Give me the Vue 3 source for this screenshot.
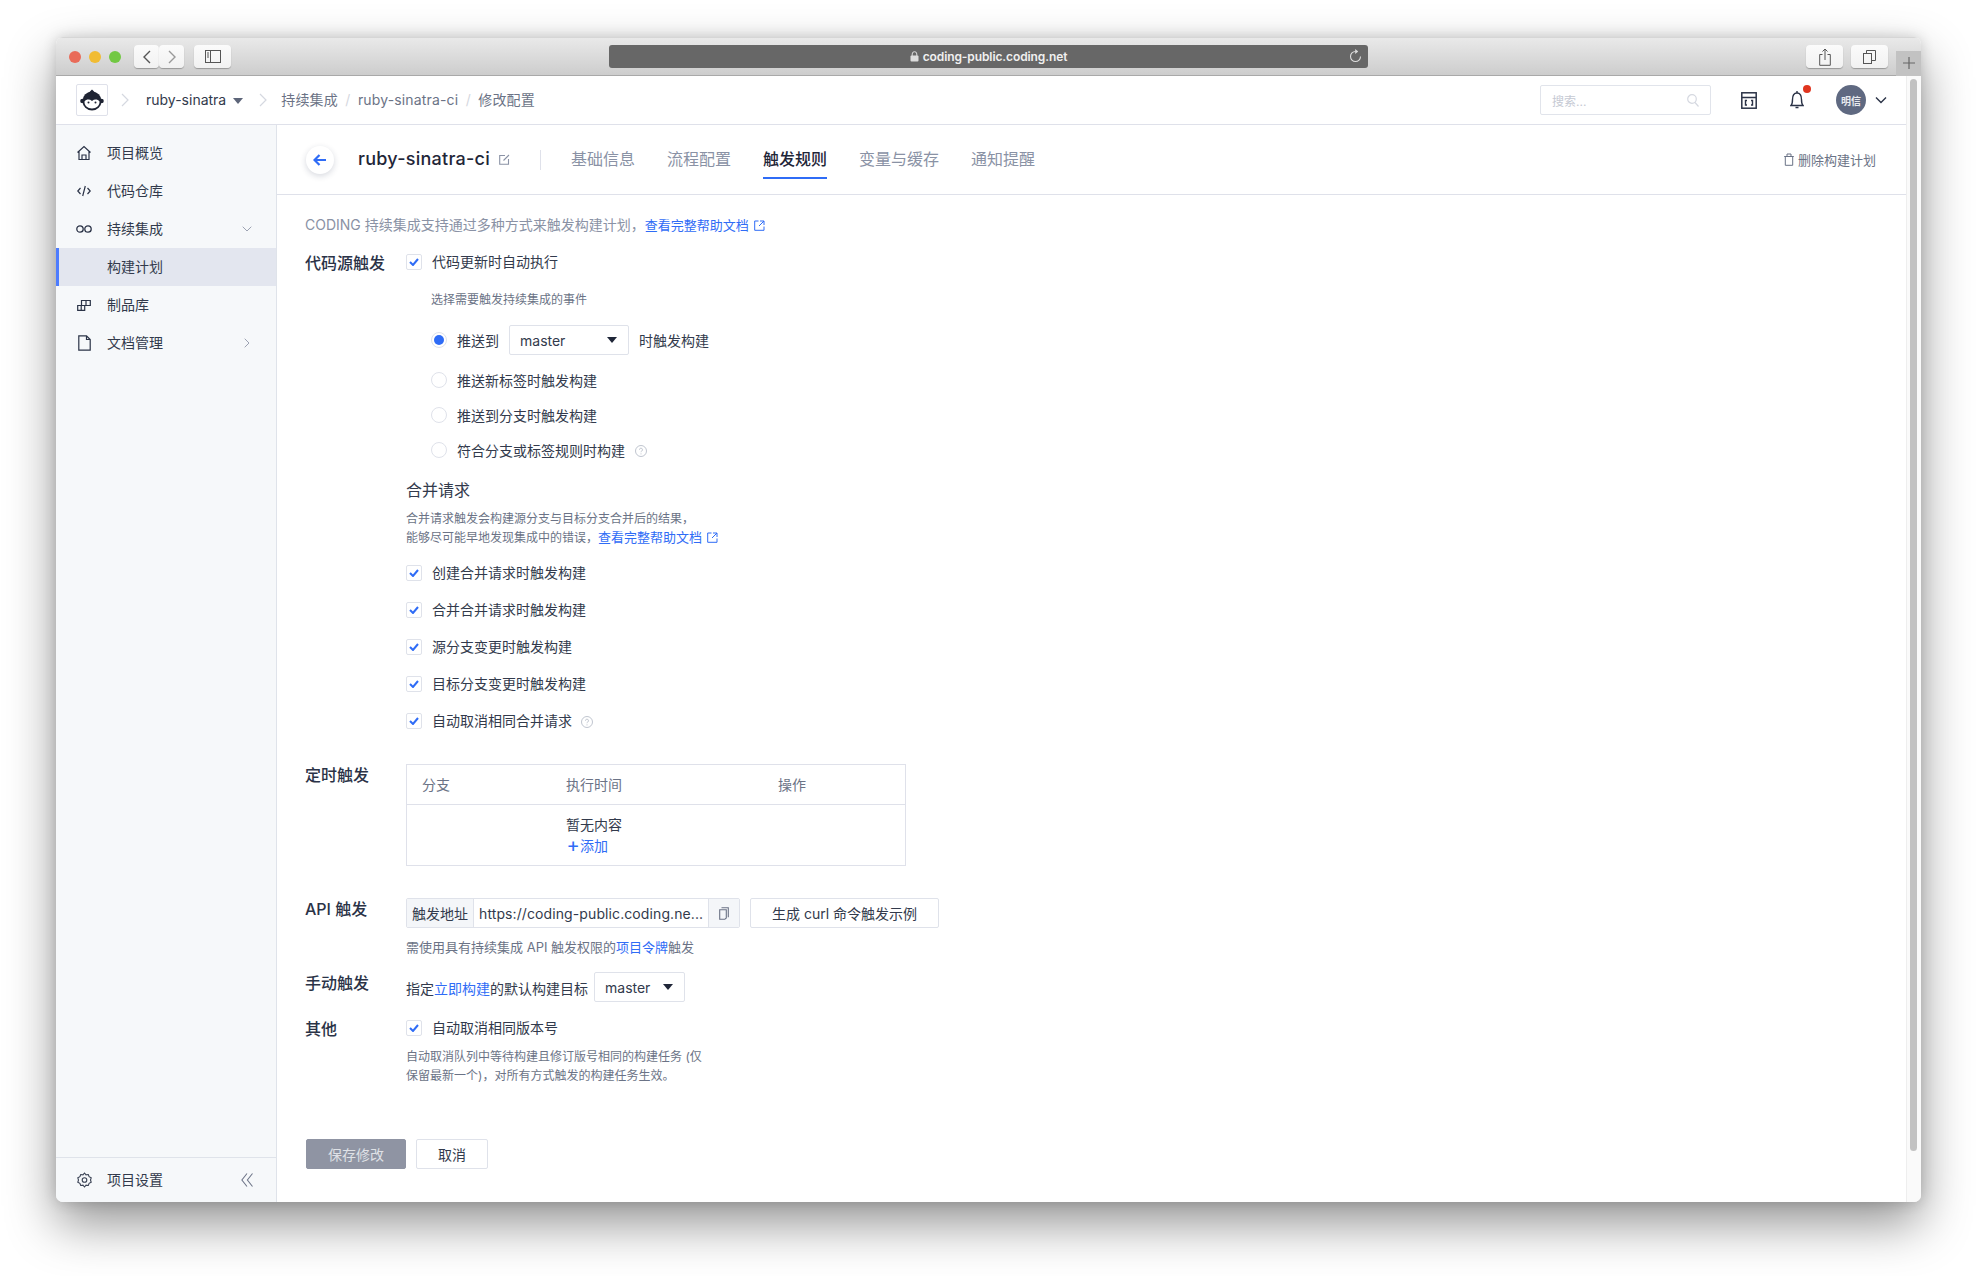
<script setup>
const nav = [
  { t: '项目概览', i: 'home' },
  { t: '代码仓库', i: 'code' },
  { t: '持续集成', i: 'inf', arrow: 'down' },
  { t: '构建计划', active: true },
  { t: '制品库', i: 'box' },
  { t: '文档管理', i: 'doc', arrow: 'right' }
]
const tabs = ['基础信息', '流程配置', '触发规则', '变量与缓存', '通知提醒']
const radios = ['推送新标签时触发构建', '推送到分支时触发构建', '符合分支或标签规则时构建']
const merges = ['创建合并请求时触发构建', '合并合并请求时触发构建', '源分支变更时触发构建', '目标分支变更时触发构建', '自动取消相同合并请求']
</script>

<template>
  <div class="page">
    <div class="window">
      <div class="titlebar">
        <div class="lights"><i class="l r"></i><i class="l y"></i><i class="l g"></i></div>
        <div class="tb-group">
          <button class="tb tb-nav"><svg width="10" height="16" viewBox="0 0 10 16"><path d="M8 2 2 8l6 6" fill="none" stroke="#555" stroke-width="1.4"/></svg></button>
          <button class="tb tb-nav"><svg width="10" height="16" viewBox="0 0 10 16"><path d="m2 2 6 6-6 6" fill="none" stroke="#999" stroke-width="1.4"/></svg></button>
        </div>
        <button class="tb tb-side"><svg width="16" height="13" viewBox="0 0 16 13"><rect x=".5" y=".5" width="15" height="12" fill="none" stroke="#555"/><path d="M5.500 0v13M2 3h2M2 5h2M2 7h2" stroke="#555" fill="none"/></svg></button>
        <div class="address">
          <span class="addr-text"><svg width="9" height="11" viewBox="0 0 9 11"><rect x="0.5" y="4.500" width="8" height="6" rx="1" fill="#ddd"/><path d="M2.200 5V3a2.300 2.300 0 0 1 4.600 0v2" fill="none" stroke="#ddd"/></svg>coding-public.coding.net</span>
          <svg class="reload" width="13" height="14" viewBox="0 0 13 14"><path d="M6.500 2.500a5 5 0 1 0 5 5" fill="none" stroke="#ddd" stroke-width="1.100"/><path d="M6.200 0v5l3-2.500z" fill="#ddd"/></svg>
        </div>
        <button class="tb tb-right"><svg width="12" height="18" viewBox="0 0 12 18"><path d="M3.500 6.500H.7v10.800h10.600V6.500H8.500M6 12V1M3.500 3.500 6 1l2.500 2.500" fill="none" stroke="#555"/></svg></button>
        <button class="tb tb-right tb-r2"><svg width="13" height="14" viewBox="0 0 13 14"><rect x=".5" y="3.500" width="8" height="10" fill="none" stroke="#555"/><path d="M3.500 3V.5h9v10H9" fill="none" stroke="#555"/></svg></button>
        <div class="newtab"><svg width="12" height="12" viewBox="0 0 12 12"><path d="M6 0v12M0 6h12" stroke="#666" stroke-width="1.200"/></svg></div>
      </div>
      <div class="body">
        <div class="app">
          <header class="topnav">
            <div class="logo">
              <svg width="24" height="22" viewBox="0 0 24 22">
                <circle cx="2.500" cy="12" r="2.300" fill="#1f2433"/><circle cx="21.500" cy="12" r="2.300" fill="#1f2433"/>
                <circle cx="12" cy="12" r="9.500" fill="#1f2433"/>
                <path d="M12 .5 14.500 3h-5z" fill="#1f2433"/>
                <path d="M4.500 12.500c2-2.500 5-2.500 7.500-.5 2.500-2 5.500-2 7.500.5.300 4-3 7-7.500 7s-7.800-3-7.500-7z" fill="#fff"/>
                <circle cx="8.500" cy="13.500" r="1" fill="#1f2433"/><circle cx="15.500" cy="13.500" r="1" fill="#1f2433"/>
              </svg>
            </div>
            <svg class="crumb-arrow first" width="8" height="14" viewBox="0 0 8 14"><path d="m1 1 6 6-6 6" fill="none" stroke="#d5d8e0" stroke-width="1.200"/></svg>
            <span class="project">ruby-sinatra</span>
            <i class="caret project-caret"></i>
            <svg class="crumb-arrow second" width="8" height="14" viewBox="0 0 8 14"><path d="m1 1 6 6-6 6" fill="none" stroke="#d5d8e0" stroke-width="1.200"/></svg>
            <span class="crumb">持续集成</span><span class="slash">/</span>
            <span class="crumb">ruby-sinatra-ci</span><span class="slash">/</span>
            <span class="crumb">修改配置</span>
            <div class="search">
              <span>搜索...</span>
              <svg width="12" height="13" viewBox="0 0 12 13"><circle cx="5" cy="5" r="4.300" fill="none" stroke="#d5d8e0" stroke-width="1.200"/><path d="m8 8.500 3.500 4" stroke="#d5d8e0" stroke-width="1.200"/></svg>
            </div>
            <svg class="tool-icon" width="16" height="17" viewBox="0 0 16 17"><rect x=".8" y=".8" width="14.400" height="15.400" fill="none" stroke="#2b3347" stroke-width="1.500"/><path d="M1 5.500h14" stroke="#2b3347" stroke-width="1.500"/><path d="M6 8.500H4.500v4.500H6M10 8.500h1.500v4.500H10" fill="none" stroke="#2b3347" stroke-width="1.400"/></svg>
            <div class="bell">
              <svg width="14" height="20" viewBox="0 0 14 20"><path d="M1 15.500c1.500-1.500 1.500-3 1.500-6C2.500 5.500 4 3 7 3s4.500 2.500 4.500 6.500c0 3 0 4.500 1.500 6z" fill="none" stroke="#2b3347" stroke-width="1.400"/><path d="M5.500 17.500h3" stroke="#2b3347" stroke-width="1.600"/><path d="M7 1v2" stroke="#2b3347" stroke-width="1.400"/></svg>
              <i class="dot"></i>
            </div>
            <div class="avatar">明信</div>
            <svg class="avatar-arrow" width="12" height="8" viewBox="0 0 12 8"><path d="m1 1.500 5 5 5-5" fill="none" stroke="#2b3347" stroke-width="1.400"/></svg>
          </header>
          <div class="split">
            <aside class="sidebar">
              <div class="menu">
                <div v-for="n in nav" :key="n.t" class="menu-item" :class="{ active: n.active }">
                  <span class="menu-icon">
                    <svg v-if="n.i === 'home'" width="16" height="16" viewBox="0 0 16 16"><path d="M1.500 7.500 8 1.500l6.500 6M3 6.500v8h10v-8M6 14.500V10h4v4.500" fill="none" stroke="#2b3347" stroke-width="1.200"/></svg>
                    <svg v-else-if="n.i === 'code'" width="14" height="12" viewBox="0 0 14 12"><path d="M3.500 3 .8 6l2.700 3M10.500 3l2.700 3-2.700 3M8.300 1 5.700 11" fill="none" stroke="#2b3347" stroke-width="1.200"/></svg>
                    <svg v-else-if="n.i === 'inf'" width="16" height="8" viewBox="0 0 16 8"><circle cx="4" cy="4" r="3.200" fill="none" stroke="#2b3347" stroke-width="1.300"/><circle cx="12" cy="4" r="3.200" fill="none" stroke="#2b3347" stroke-width="1.300"/></svg>
                    <svg v-else-if="n.i === 'box'" width="14" height="12" viewBox="0 0 14 12"><path d="M.7 6.500h7v4.800H.7zM4.500 6.500v-5h8.800v5H7.700M9 1.500v5M4.200 6.500v4.800" fill="none" stroke="#2b3347" stroke-width="1.200"/></svg>
                    <svg v-else-if="n.i === 'doc'" width="13" height="16" viewBox="0 0 13 16"><path d="M.8.800h7.700l3.700 3.700v10.700H.8zM8.500.8v3.700h3.700" fill="none" stroke="#2b3347" stroke-width="1.200"/></svg>
                  </span>
                  <span class="menu-text">{{ n.t }}</span>
                  <svg v-if="n.arrow === 'down'" class="menu-arrow down" width="10" height="6" viewBox="0 0 10 6"><path d="m.7.700 4.300 4.300L9.300.7" fill="none" stroke="#9ca2b2" stroke-width="1"/></svg>
                  <svg v-if="n.arrow === 'right'" class="menu-arrow right" width="6" height="10" viewBox="0 0 6 10"><path d="m.7.700L5 5 .7 9.300" fill="none" stroke="#9ca2b2" stroke-width="1"/></svg>
                </div>
              </div>
              <div class="side-foot">
                <span class="menu-icon"><svg width="15" height="16" viewBox="0 0 15 16"><path d="M7.500 1 9 2.800l2.300-.3.800 2.200 2.100 1L13.500 8l.7 2.300-2.100 1-.8 2.200-2.300-.3L7.500 15 6 13.200l-2.300.3-.8-2.200-2.100-1L1.500 8 .8 5.700l2.100-1 .8-2.200 2.300.3z" fill="none" stroke="#3a4254" stroke-width="1.100"/><circle cx="7.500" cy="8" r="2.300" fill="none" stroke="#3a4254" stroke-width="1.100"/></svg></span>
                <span class="menu-text">项目设置</span>
                <svg class="collapse" width="12" height="14" viewBox="0 0 12 14"><path d="M6 .5.900 7 6 13.500M11.500.5 6.400 7l5.100 6.500" fill="none" stroke="#6f7689" stroke-width="1.100"/></svg>
              </div>
            </aside>
            <main class="main">
              <div class="head">
                <button class="back"><svg width="14" height="12" viewBox="0 0 14 12"><path d="M6.500 1 1.500 6l5 5M2 6h11" fill="none" stroke="#2f6cf6" stroke-width="2.200"/></svg></button>
                <h1 class="title">ruby-sinatra-ci</h1>
                <svg class="edit" width="11" height="11" viewBox="0 0 11 11"><path d="M6 1.500H.7v8.800h8.800V5M4.500 6.500 10 1" fill="none" stroke="#8a92a5" stroke-width="1.100"/></svg>
                <i class="vline"></i>
                <div class="tabs">
                  <span v-for="t in tabs" :key="t" class="tab" :class="{ on: t === '触发规则' }">{{ t }}</span>
                </div>
                <div class="del">
                  <svg width="10" height="13" viewBox="0 0 10 13"><path d="M1.300 3.500h7.400v8.800H1.300zM.2 3.500h9.600M3 3.500V1h4v2.500" fill="none" stroke="#6b7386" stroke-width="1"/></svg>
                  <span>删除构建计划</span>
                </div>
              </div>
              <div class="content">
                <p class="intro">CODING 持续集成支持通过多种方式来触发构建计划，<a class="link">查看完整帮助文档<svg class="ext" width="11" height="11" viewBox="0 0 11 11"><path d="M4.500 1H.7v9.300H10V6.500M6 1h4v4M10 1 5 6" fill="none" stroke="#2f6cf6" stroke-width="1"/></svg></a></p>

                <section class="row first">
                  <div class="label">代码源触发</div>
                  <div class="field">
                    <label class="check"><i class="box"><svg width="10" height="8" viewBox="0 0 10 8"><path d="m1 4 3 3 5-6" fill="none" stroke="#2f6cf6" stroke-width="2"/></svg></i>代码更新时自动执行</label>
                    <p class="small events">选择需要触发持续集成的事件</p>
                    <div class="radio-row top"><i class="radio on"></i><span>推送到</span>
                      <div class="select wide"><span>master</span><i class="caret dark"></i></div>
                      <span>时触发构建</span>
                    </div>
                    <div v-for="(r, i) in radios" :key="r" class="radio-row"><i class="radio"></i><span>{{ r }}</span>
                      <svg v-if="i === 2" class="help" width="12" height="12" viewBox="0 0 12 12"><circle cx="6" cy="6" r="5.500" fill="none" stroke="#b9bec9" stroke-width=".9"/><path d="M4.500 4.700a1.500 1.500 0 1 1 2.200 1.300c-.5.300-.7.600-.7 1.200M6 8.400v1" fill="none" stroke="#b9bec9" stroke-width=".9"/></svg>
                    </div>
                    <h3 class="sub">合并请求</h3>
                    <p class="small para">合并请求触发会构建源分支与目标分支合并后的结果，<br>能够尽可能早地发现集成中的错误，<a class="link">查看完整帮助文档<svg class="ext" width="11" height="11" viewBox="0 0 11 11"><path d="M4.500 1H.7v9.300H10V6.500M6 1h4v4M10 1 5 6" fill="none" stroke="#2f6cf6" stroke-width="1"/></svg></a></p>
                    <div class="merge">
                      <label v-for="(m, i) in merges" :key="m" class="check"><i class="box"><svg width="10" height="8" viewBox="0 0 10 8"><path d="m1 4 3 3 5-6" fill="none" stroke="#2f6cf6" stroke-width="2"/></svg></i>{{ m }}
                        <svg v-if="i === 4" class="help h2" width="12" height="12" viewBox="0 0 12 12"><circle cx="6" cy="6" r="5.500" fill="none" stroke="#b9bec9" stroke-width=".9"/><path d="M4.500 4.700a1.500 1.500 0 1 1 2.200 1.300c-.5.300-.7.600-.7 1.200M6 8.400v1" fill="none" stroke="#b9bec9" stroke-width=".9"/></svg>
                      </label>
                    </div>
                  </div>
                </section>

                <section class="row timed">
                  <div class="label">定时触发</div>
                  <div class="table">
                    <div class="thead"><span class="c1">分支</span><span class="c2">执行时间</span><span class="c3">操作</span></div>
                    <div class="tbody"><div>暂无内容</div><a class="link add"><b>+</b>添加</a></div>
                  </div>
                </section>

                <section class="row api">
                  <div class="label">API 触发</div>
                  <div class="field">
                    <div class="api-line">
                      <div class="group">
                        <span class="addon">触发地址</span>
                        <span class="url">https://coding-public.coding.ne...</span>
                        <span class="copy"><svg width="10" height="13" viewBox="0 0 10 13"><path d="M2.500.7h6.800v9.500M.7 2.700h6.600v8.300l-1.500 1.300H.7z" fill="none" stroke="#6b7386" stroke-width="1.100"/></svg></span>
                      </div>
                      <button class="btn curl">生成 curl 命令触发示例</button>
                    </div>
                    <p class="small api-hint">需使用具有持续集成 API 触发权限的<a class="link">项目令牌</a>触发</p>
                  </div>
                </section>

                <section class="row manual">
                  <div class="label">手动触发</div>
                  <div class="manual-line">
                    <span class="manual-text">指定<a class="link">立即构建</a>的默认构建目标</span>
                    <div class="select narrow"><span>master</span><i class="caret dark"></i></div>
                  </div>
                </section>

                <section class="row other">
                  <div class="label">其他</div>
                  <div class="field">
                    <label class="check"><i class="box"><svg width="10" height="8" viewBox="0 0 10 8"><path d="m1 4 3 3 5-6" fill="none" stroke="#2f6cf6" stroke-width="2"/></svg></i>自动取消相同版本号</label>
                    <p class="small desc">自动取消队列中等待构建且修订版号相同的构建任务 (仅保留最新一个)，对所有方式触发的构建任务生效。</p>
                  </div>
                </section>

                <div class="actions">
                  <button class="btn save">保存修改</button>
                  <button class="btn cancel">取消</button>
                </div>
              </div>
            </main>
          </div>
        </div>
        <div class="scrollbar"><i></i></div>
      </div>
    </div>
  </div>
</template>

<style>
html, body { margin: 0; background: #fff; }
</style>

<style scoped>
* { box-sizing: border-box; }
.page {
  width: 1977px; height: 1276px; padding: 37px 56px 74px 56px;
  font-family: Inter, "Noto Sans CJK SC", sans-serif; font-size: 14px; color: #2b3347;
  overflow: hidden; background: #fff;
}
p, h1, h3 { margin: 0; font-weight: 400; }
button { font-family: inherit; padding: 0; cursor: pointer; }
.window {
  width: 100%; height: 100%; display: flex; flex-direction: column; background: #fff;
  border-radius: 7px; overflow: hidden;
  box-shadow: 0 22px 50px rgba(0,0,0,.42), 0 0 14px rgba(0,0,0,.16);
}
.titlebar {
  height: 39px; flex: none; display: flex; align-items: center; padding-left: 13px;
  background: linear-gradient(#e9e9e9, #cdcdcd); border-bottom: 1px solid #a9a9a9; border-top: 1px solid #d6d6d6;
}
.lights { display: flex; gap: 8px; }
.l { width: 12px; height: 12px; border-radius: 50%; display: block; }
.r { background: #e96b59; } .y { background: #f1bc33; } .g { background: #72c843; }
.tb-group { display: flex; margin-left: 13px; }
.tb {
  height: 23px; background: linear-gradient(#fbfbfb, #f1f1f1); border: 0; border-radius: 4px;
  box-shadow: 0 1px 1px rgba(0,0,0,.28); display: flex; align-items: center; justify-content: center;
}
.tb-nav { width: 25px; }
.tb-side { width: 37px; margin-left: 10px; }
.address {
  width: 759px; height: 23px; margin-left: 378px; background: #676767; border-radius: 3px;
  display: flex; align-items: center; justify-content: center; position: relative; color: #f0f0f0;
}
.addr-text { font-size: 12px; font-weight: 600; letter-spacing: -.1px; display: flex; align-items: center; gap: 4px; }
.reload { position: absolute; right: 6px; top: 4px; }
.tb-right { width: 37px; margin-left: 438px; }
.tb-r2 { margin-left: 8px; }
.newtab {
  width: 25px; height: 25px; margin-left: 8px; margin-top: 13px; background: #c2c2c2;
  display: flex; align-items: center; justify-content: center;
}
.body { flex: 1; min-height: 0; display: flex; }
.app { flex: 1; min-width: 0; display: flex; flex-direction: column; }
.scrollbar { width: 15px; flex: none; background: #fafafa; border-left: 1px solid #eeeeee; padding: 3px 0 0 3px; }
.scrollbar i { display: block; width: 7px; height: 1072px; border-radius: 4px; background: #c2c2c2; }

.topnav { height: 49px; flex: none; display: flex; align-items: center; padding-left: 20px; border-bottom: 1px solid #dfe1ea; background: #fff; }
.logo { width: 32px; height: 32px; border: 1px solid #dfe1ea; border-radius: 2px; display: flex; align-items: center; justify-content: center; }
.crumb-arrow.first { margin-left: 13px; }
.project { margin-left: 17px; color: #323a4c; line-height: 20px; }
.caret { width: 0; height: 0; border-left: 5px solid transparent; border-right: 5px solid transparent; border-top: 6px solid #5d6579; display: block; }
.project-caret { margin-left: 7px; margin-top: 1px; }
.crumb-arrow.second { margin-left: 16px; }
.crumb { color: #6b7386; letter-spacing: .15px; padding-bottom: 2px; }
.crumb-arrow.second + .crumb { margin-left: 14px; }
.slash { color: #d5d8e0; margin: 0 7.500px; padding-bottom: 2px; }
.search {
  width: 171px; height: 30px; margin-left: auto; border: 1px solid #e1e4eb; border-radius: 2px;
  display: flex; align-items: center; justify-content: space-between; padding: 0 11px; font-size: 12px; color: #c5c9d3;
}
.tool-icon { margin-left: 30px; }
.bell { position: relative; margin-left: 33px; height: 20px; }
.dot { position: absolute; right: -7px; top: -5px; width: 8px; height: 8px; border-radius: 50%; background: #e0351f; }
.avatar { width: 30px; height: 30px; margin-left: 32px; border-radius: 50%; background: #5f6981; color: #e8eaef; font-size: 10px; font-weight: 600; display: flex; align-items: center; justify-content: center; }
.avatar-arrow { margin-left: 9px; margin-right: 19px; }

.split { flex: 1; min-height: 0; display: flex; }
.sidebar { width: 221px; flex: none; background: #f6f8fa; border-right: 1px solid #dfe3ea; display: flex; flex-direction: column; }
.menu { flex: 1; padding-top: 9px; }
.menu-item { height: 38px; display: flex; align-items: center; padding-left: 20px; position: relative; color: #323a4c; }
.menu-item.active { background: #e3e6ef; }
.menu-item.active::before { content: ""; position: absolute; left: 0; top: 0; bottom: 0; width: 3px; background: #4d7cfe; }
.menu-icon { width: 16px; height: 16px; margin-right: 15px; display: flex; align-items: center; justify-content: center; flex: none; }
.menu-text { line-height: 20px; }
.menu-arrow { position: absolute; top: 50%; transform: translateY(-50%); }
.menu-arrow.down { left: 186px; }
.menu-arrow.right { left: 188px; }
.side-foot { height: 45px; flex: none; border-top: 1px solid #dfe3ea; display: flex; align-items: center; padding-left: 20px; color: #323a4c; }
.collapse { margin-left: 78px; }

.main { flex: 1; min-width: 0; display: flex; flex-direction: column; overflow: hidden; }
.head { height: 70px; flex: none; display: flex; align-items: center; padding: 0 30px 0 29px; border-bottom: 1px solid #dfe1ea; }
.back { width: 28px; height: 28px; border: 0; border-radius: 50%; background: #fff; box-shadow: 0 2px 6px rgba(30,40,70,.18); display: flex; align-items: center; justify-content: center; }
.title { margin-left: 24px; font-size: 18px; font-weight: 500; color: #1f2638; line-height: 26px; letter-spacing: .25px; padding-bottom: 2px; }
.edit { margin-left: 9px; }
.vline { width: 1px; height: 20px; background: #dfe1ea; margin-left: 30px; }
.tabs { display: flex; gap: 32px; margin-left: 30px; align-self: stretch; }
.tab { font-size: 16px; color: #8a92a5; line-height: 22px; padding-top: 23px; position: relative; }
.tab.on { color: #1f2638; font-weight: 500; }
.tab.on::after { content: ""; position: absolute; left: 0; right: 0; top: 52px; height: 2px; background: #2f6cf6; }
.del { margin-left: auto; display: flex; align-items: center; gap: 4px; font-size: 13px; color: #6b7386; }
.del span { padding-bottom: 1px; }

.content { padding: 20px 0 0 28px; }
.intro { line-height: 20px; color: #8a92a5; }
.link { color: #2f6cf6; }
.intro .link, .para .link { font-size: 13px; }
.ext { margin-left: 5px; vertical-align: -1px; }
.row { display: flex; }
.row.first { margin-top: 17px; }
.label { width: 101px; flex: none; font-size: 16px; font-weight: 500; line-height: 22px; color: #2b3347; }
.field { flex: 1; min-width: 0; }
.check { height: 20px; display: flex; align-items: center; line-height: 20px; color: #323a4c; }
.box { width: 16px; height: 16px; margin-right: 10px; border: 1px solid #dfe2ea; border-radius: 2px; background: #fff; display: flex; align-items: center; justify-content: center; flex: none; }
.small { font-size: 12px; line-height: 19px; color: #6b7386; }
.events { margin-top: 19px; padding-left: 25px; line-height: 18px; }
.radio-row { height: 20px; margin-top: 15px; padding-left: 25px; display: flex; align-items: center; color: #323a4c; }
.radio-row.top { height: 30px; margin-top: 16px; }
.radio { width: 16px; height: 16px; margin-right: 10px; border-radius: 50%; border: 1px solid #dfe2ea; background: #fff; position: relative; flex: none; }
.radio.on::after { content: ""; position: absolute; left: 2px; top: 2px; width: 10px; height: 10px; border-radius: 50%; background: #2f6cf6; }
.select { height: 30px; border: 1px solid #dfe2ea; border-radius: 2px; display: flex; align-items: center; justify-content: space-between; padding: 0 11px 0 10px; color: #323a4c; }
.select.wide { width: 120px; margin: 0 10px 0 10px; }
.select.narrow { width: 91px; margin-left: 6px; }
.caret.dark { border-top-color: #1f2638; }
.help { margin-left: 10px; margin-top: 2px; }
.help.h2 { margin-left: 9px; }
.sub { margin-top: 18px; font-size: 16px; line-height: 24px; color: #323a4c; }
.para { margin-top: 7px; }
.merge { margin-top: 16px; display: flex; flex-direction: column; gap: 17px; }
.row.timed { margin-top: 33px; }
.table { width: 500px; height: 102px; border: 1px solid #dfe1ea; }
.thead { height: 40px; border-bottom: 1px solid #dfe1ea; display: flex; align-items: center; color: #6b7386; padding-bottom: 2px; }
.c1 { width: 159px; padding-left: 15px; }
.c2 { width: 212px; }
.tbody { padding: 9px 0 0 159px; line-height: 21px; color: #323a4c; }
.add { display: flex; align-items: center; }
.add b { font-weight: 400; font-size: 20px; width: 14px; text-align: center; }
.row.api { margin-top: 32px; }
.api-line { display: flex; gap: 10px; }
.group { width: 334px; height: 30px; border: 1px solid #dfe2ea; border-radius: 2px; display: flex; align-items: center; }
.addon { width: 67px; height: 100%; flex: none; background: #f4f6f9; border-right: 1px solid #dfe2ea; display: flex; align-items: center; justify-content: center; color: #323a4c; }
.url { flex: 1; padding-left: 5px; white-space: nowrap; color: #323a4c; letter-spacing: .1px; }
.copy { width: 31px; height: 100%; flex: none; background: #f4f6f9; border-left: 1px solid #dfe2ea; display: flex; align-items: center; justify-content: center; }
.btn { height: 30px; border: 1px solid #dfe2ea; border-radius: 2px; background: #fff; font-size: 14px; color: #323a4c; }
.curl { width: 189px; }
.api-hint { margin-top: 10px; line-height: 18px; font-size: 13px; }
.row.manual { margin-top: 16px; }
.manual-line { display: flex; align-items: center; }
.manual-text { color: #323a4c; padding-top: 1px; }
.row.other { margin-top: 16px; }
.desc { margin-top: 9px; width: 300px; }
.actions { margin-top: 54px; display: flex; gap: 10px; padding-left: 1px; }
.save { width: 100px; background: #8f94a3; border-color: #8f94a3; color: #dfe1e6; }
.cancel { width: 72px; }
</style>
